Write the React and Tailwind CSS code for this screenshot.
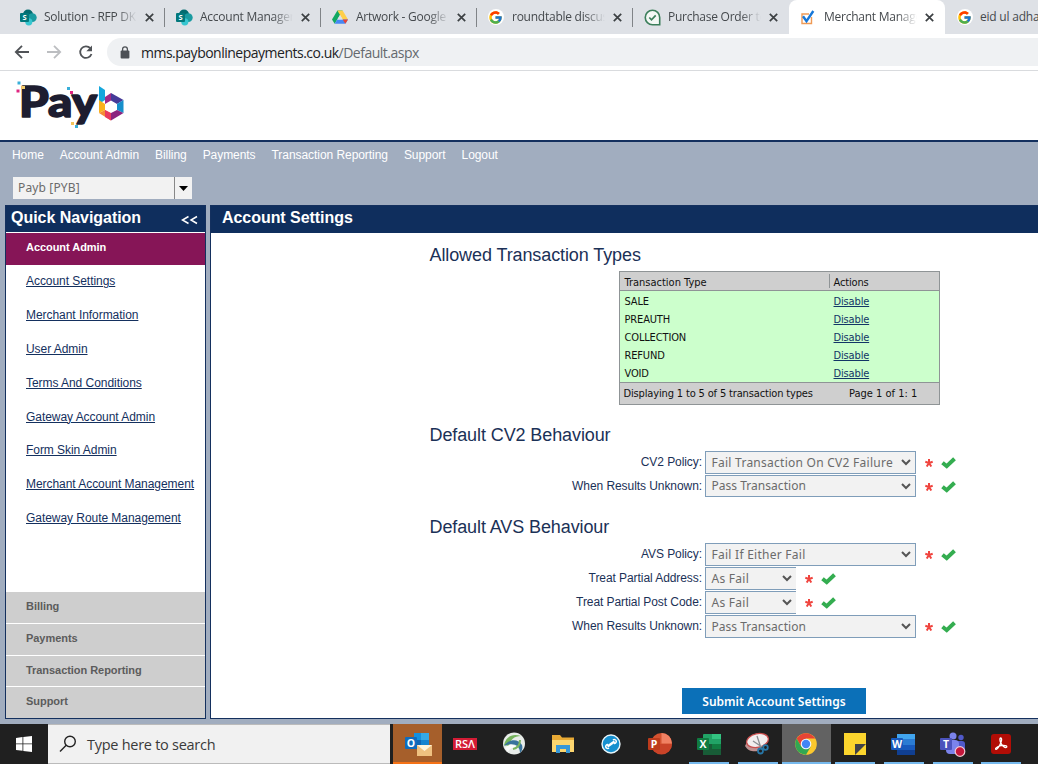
import React from "react";
import { FcGoogle } from "react-icons/fc";

const SharePoint = () => (
  <svg width="17" height="17" viewBox="0 0 17 17" className="shrink-0">
    <circle cx="8" cy="5.5" r="5" fill="#036c70" />
    <circle cx="12.3" cy="8.6" r="4.4" fill="#1a9ba1" />
    <circle cx="8.8" cy="12.8" r="3.6" fill="#37c6d0" />
    <rect x="0" y="4" width="9" height="9" rx="1" fill="#03787c" />
    <text x="4.5" y="11.2" textAnchor="middle" fontSize="7.5" fontWeight="700" fill="#fff" fontFamily="Open Sans, sans-serif">S</text>
  </svg>
);

const Drive = () => (
  <svg width="16" height="16" viewBox="0 0 16 16" className="shrink-0">
    <path d="M5.4 1.5h5.2L5.3 10.6 2.7 14.8 0 10.4z" fill="#11a861" />
    <path d="M5.4 1.5h5.2L16 10.4h-5.3z" fill="#ffcf48" />
    <path d="M5.3 10.4H16l-2.7 4.4H2.7z" fill="#4688f4" />
    <path d="M10.7 10.4H16l-2.7 4.4z" fill="#ea4335" />
    <path d="M8 6l2.7 4.4H5.3z" fill="#dee1e6" />
  </svg>
);

const Google = () => (
  <span className="flex size-4 shrink-0 items-center justify-center rounded-full bg-white">
    <FcGoogle size={15} />
  </span>
);

const Purchase = () => (
  <svg width="17" height="17" viewBox="0 0 17 17" fill="none" stroke="#3c7f5b" className="shrink-0">
    <path d="M8.5 1.2A7.2 7.2 0 1 0 8.5 15.7H15.7V8.5A7.2 7.2 0 0 0 8.5 1.2z" fill="#f4f8f5" strokeWidth="1.6" />
    <path d="M5.3 8.5l2.2 2.3 4.2-4.4" strokeWidth="1.7" />
  </svg>
);

const Checkbox = () => (
  <svg width="16" height="17" viewBox="0 0 16 17" fill="none" className="shrink-0">
    <path d="M9 5H2v9.5h9.5V8" stroke="#ef9a55" strokeWidth="1.4" />
    <path d="M3 7.2l3.5 5L13.3 2" stroke="#1677d8" strokeWidth="2.4" />
  </svg>
);

const CloseX = () => (
  <svg width="9" height="9" viewBox="0 0 9 9" stroke="#3c4043" strokeWidth="1.7" className="shrink-0">
    <path d="M.8.8l7.4 7.4M8.2.8L.8 8.2" />
  </svg>
);

const tabs = [
  { title: "Solution - RFP DK", icon: <SharePoint /> },
  { title: "Account Manager", icon: <SharePoint /> },
  { title: "Artwork - Google", icon: <Drive /> },
  { title: "roundtable discus", icon: <Google /> },
  { title: "Purchase Order to", icon: <Purchase /> },
  { title: "Merchant Manage", icon: <Checkbox />, active: true },
];

function Tab({ title, icon, active, divider }) {
  return (
    <div className={"relative flex h-[34px] w-[156px] shrink-0 items-center pl-[11px] " + (active ? "rounded-t-lg bg-white" : "")}>
      <span className="flex w-[24.5px] shrink-0">{icon}</span>
      <span className="w-[101px] shrink-0 whitespace-nowrap text-[12px] tracking-[-0.25px] text-[#45494d] [mask-image:linear-gradient(to_right,#000_72%,transparent_92%)]">{title}</span>
      <span className="flex"><CloseX /></span>
      {divider && <span className="absolute top-[8px] right-0 h-[19px] w-px bg-[#808387]" />}
    </div>
  );
}

function BrowserBar() {
  return (
    <header className="shrink-0 font-['Open_Sans',sans-serif]">
      <div className="flex h-[34px] overflow-hidden bg-[#dee1e6] pl-[8.5px]">
        {tabs.map((t, i) => (
          <Tab key={t.title} {...t} divider={i < 4} />
        ))}
        <div className="flex h-[34px] items-center pl-[12px]">
          <Google />
          <span className="ml-[7.5px] w-[57px] whitespace-nowrap text-[12px] tracking-[-0.22px] text-[#45494d]">eid ul adha</span>
        </div>
      </div>
      <div className="flex h-[37px] items-center border-b border-[#d9dbde] bg-white pl-[14px]">
        <svg width="84" height="20" viewBox="0 0 84 20" fill="none" strokeWidth="1.8" className="shrink-0">
          <path d="M15 10H2M8 3.8L1.8 10 8 16.2" stroke="#505357" />
          <path d="M33 10h13M40 3.8L46.2 10 40 16.2" stroke="#bcbec1" />
          <path d="M76.3 6.2A5.8 5.8 0 1 0 77.5 12" stroke="#505357" />
          <path d="M78 3.5v5.7h-5.7z" fill="#505357" />
        </svg>
        <div className="ml-[9px] flex h-[28px] flex-1 items-center rounded-l-full bg-[#eff1f3] pl-[13px]">
          <svg width="10" height="13" viewBox="0 0 10 13" className="shrink-0">
            <rect x="0.6" y="4.4" width="8.8" height="8" rx="1" fill="#4d5156" />
            <path d="M2.6 5V3.2a2.4 2.4 0 0 1 4.8 0V5" fill="none" stroke="#4d5156" strokeWidth="1.3" />
          </svg>
          <span className="ml-[11px] whitespace-nowrap text-[14px] tracking-[-0.5px] text-[#202124]">
            mms.paybonlinepayments.co.uk<span className="text-[#65696e]">/Default.aspx</span>
          </span>
        </div>
      </div>
    </header>
  );
}

function Logo() {
  return (
    <svg width="112" height="52" viewBox="0 0 112 52">
      <g fill="#1d1d30" stroke="#1d1d30" strokeLinejoin="round" strokeWidth="1.6" fontFamily="Lato, sans-serif" fontWeight="900" fontSize="42">
        <text x="4" y="37" textLength="78" lengthAdjust="spacingAndGlyphs">Pay</text>
      </g>
      <path d="M84 6l6 4v10l-6 4z" fill="#14a7dc" />
      <path d="M84 20l6 4v6l-6 3z" fill="#f9b21d" />
      <path d="M84 33l6-3 6 3.5v7z" fill="#f58a35" />
      <path d="M90 17l6-4v7.500l-6 3.500z" fill="#a02a86" />
      <path d="M96 13l12.500 7-6.500 4-6-3.500z" fill="#453a98" />
      <path d="M108.500 20v13l-6.500-3v-6z" fill="#168fcb" />
      <path d="M108.500 33L96 40.500v-7.500l6-3z" fill="#8b247f" />
      <path d="M96 40.500L90 37v-7l6 3z" fill="#e9385f" />
      <rect x="2.500" y="1.500" width="3" height="3" fill="#39afd9" />
      <rect x="7" y="6" width="3" height="3" fill="#f4cf6c" />
      <rect x="1.500" y="9.500" width="3" height="3" fill="#df2580" />
      <rect x="52" y="7" width="3" height="3" fill="#39afd9" />
      <rect x="55" y="11" width="3" height="3" fill="#df2580" />
      <rect x="56" y="42" width="3" height="3" fill="#f4c45a" />
      <rect x="60" y="45" width="3" height="3" fill="#39afd9" />
    </svg>
  );
}

const menu = ["Home", "Account Admin", "Billing", "Payments", "Transaction Reporting", "Support", "Logout"];
const links = [
  "Account Settings",
  "Merchant Information",
  "User Admin",
  "Terms And Conditions",
  "Gateway Account Admin",
  "Form Skin Admin",
  "Merchant Account Management",
  "Gateway Route Management",
];

function Sidebar() {
  return (
    <aside className="flex w-[201px] shrink-0 flex-col border border-[#14305e] bg-white">
      <div className="flex h-[26px] shrink-0 items-center justify-between bg-[#0f2e5d] pr-[7px] pb-[2px] pl-[5px] text-white">
        <h2 className="text-[16px] leading-none font-bold tracking-[-0.04px]">Quick Navigation</h2>
        <svg width="17" height="10" viewBox="0 0 17 10" fill="none" stroke="#fff" strokeWidth="1.5" className="mt-[3px]">
          <path d="M7.500 1.500L1.500 5l6 3.500M16 1.500L10 5l6 3.500" />
        </svg>
      </div>
      <div className="mt-px h-[32px] shrink-0 bg-[#861557] pl-[20px] text-[11px] leading-[29px] font-bold tracking-[-0.05px] text-white">Account Admin</div>
      <nav className="flex h-[327px] shrink-0 flex-col items-start pl-[20px]">
        {links.map((l) => (
          <a key={l} className="h-[33.8px] pt-[8.400px] text-[12px] leading-[17px] tracking-[-0.05px] whitespace-nowrap text-[#14305e] underline">{l}</a>
        ))}
      </nav>
      <div className="flex flex-1 flex-col gap-px">
        {["Billing", "Payments", "Transaction Reporting", "Support"].map((s) => (
          <div key={s} className="flex-1 bg-[#cecece] pl-[20px] text-[11px] leading-[29px] font-bold tracking-[-0.05px] text-[#5c5c5c]">{s}</div>
        ))}
      </div>
    </aside>
  );
}

function TransactionTable() {
  return (
    <div className="ml-[408px] flex h-[134px] w-[321px] flex-col border border-[#8f9496] bg-[#ccffcc] font-['DejaVu_Sans_Condensed','DejaVu_Sans',sans-serif] text-[11px] tracking-[-0.15px] text-[#111] [font-stretch:condensed]">
      <div className="flex h-[19px] border-b border-[#8f9496] bg-[#cfcfcf] leading-[21px]">
        <span className="w-[209px] pl-[4.500px] tracking-[0px]">Transaction Type</span>
        <span className="mt-[2px] h-[14px] border-l border-[#8f9496] pl-[3.500px] leading-[17px]">Actions</span>
      </div>
      <div className="flex h-[91px] flex-col pt-px">
        {["SALE", "PREAUTH", "COLLECTION", "REFUND", "VOID"].map((t) => (
          <div key={t} className="flex h-[18px] leading-[19px]">
            <span className="w-[213.500px] pl-[4.500px]">{t}</span>
            <a className="text-[#123566] underline">Disable</a>
          </div>
        ))}
      </div>
      <div className="flex flex-1 border-t border-[#8f9496] bg-[#cfcfcf] leading-[21px] whitespace-nowrap">
        <span className="w-[229px] pl-[3.500px]">Displaying 1 to 5 of 5 transaction types</span>
        <span className="tracking-[0px]">Page 1 of 1: 1</span>
      </div>
    </div>
  );
}

function Field({ label, value, small, short }) {
  return (
    <div className={"flex " + (short ? "mb-[2px] h-[22px]" : "mb-px h-[23px]")}>
      <label className="w-[492px] pr-[1px] text-right text-[12px] leading-[22px] tracking-[-0.07px] text-[#1b3157]">{label}</label>
      <div className={"ml-[2px] flex items-center justify-between border border-[#7f9db9] bg-[#f2f2f2] pl-[5.500px] font-['Noto_Sans',sans-serif] text-[12px] text-[#6b6b6b] " + (small ? "w-[91px] border-r-0 pr-[4px] tracking-[0.28px]" : "w-[211px] pr-[4px]")}>
        <span className={"whitespace-nowrap " + (value === "Pass Transaction" ? "tracking-[0.03px]" : "tracking-[0.26px]")}>{value}</span>
        <svg width="10" height="7" viewBox="0 0 10 7" fill="none" stroke="#555" strokeWidth="2"><path d="M1 1l4 4 4-4" /></svg>
      </div>
      <svg width="8" height="8" viewBox="0 0 8 8" stroke="#f0443e" strokeWidth="2" className="mt-[8px] ml-[9px]">
        <path d="M4 0v4M4 4L.3 2.800M4 4l3.700-1.200M4 4L1.700 7.500M4 4l2.300 3.500" />
      </svg>
      <svg width="15" height="12" viewBox="0 0 15 12" fill="none" stroke="#34ad50" strokeWidth="4" className="mt-[6px] ml-[7.500px]">
        <path d="M1.500 5.800l4.200 3.400L13.500 1.800" />
      </svg>
    </div>
  );
}

function Main() {
  const heading = "pl-[218.500px] text-[18px] leading-[22px] tracking-[-0.1px] text-[#1b3157]";
  return (
    <main className="ml-[4px] flex flex-1 flex-col border border-r-0 border-[#14305e] bg-white">
      <h1 className="h-[27px] shrink-0 bg-[#0f2e5d] pl-[11px] text-[16px] leading-[23px] font-bold tracking-[-0.05px] text-white">Account Settings</h1>
      <h2 className={heading + " mt-[11px] mb-[5px]"}>Allowed Transaction Types</h2>
      <TransactionTable />
      <h2 className={heading + " mt-[19px] mb-[5px]"}>Default CV2 Behaviour</h2>
      <Field label="CV2 Policy:" value="Fail Transaction On CV2 Failure" />
      <Field label="When Results Unknown:" value="Pass Transaction" short />
      <h2 className={heading + " mt-[17px] mb-[5px]"}>Default AVS Behaviour</h2>
      <Field label="AVS Policy:" value="Fail If Either Fail" />
      <Field label="Treat Partial Address:" value="As Fail" small />
      <Field label="Treat Partial Post Code:" value="As Fail" small />
      <Field label="When Results Unknown:" value="Pass Transaction" />
      <button className="mt-[49px] ml-[471px] h-[26px] w-[184px] bg-[#0b70b8] pt-px font-['Noto_Sans',sans-serif] text-[12px] font-semibold whitespace-nowrap text-white">Submit Account Settings</button>
    </main>
  );
}

const Letter = ({ x, y, children }) => (
  <text x={x} y={y} textAnchor="middle" fontSize="10.500" fontWeight="700" fill="#fff" fontFamily="Open Sans, sans-serif">{children}</text>
);

const icons = {
  outlook: (
    <>
      <rect x="9" y="2" width="15" height="16" rx="1" fill="#1066b5" />
      <path d="M9 2h7v7H9z" fill="#1490df" /><path d="M16 2h8v7h-8z" fill="#35a9e5" /><path d="M16 9h8v8h-8z" fill="#1683d0" />
      <rect x="0" y="6" width="12" height="12" rx="1" fill="#0f6cbd" />
      <Letter x={6} y={15.8}>O</Letter>
      <path d="M12 14h15v11H12z" fill="#efc180" /><path d="M12 14l7.500 6 7.500-6z" fill="#fff3dc" />
    </>
  ),
  rsa: (
    <>
      <rect x="0" y="7" width="24" height="12" fill="#d41c35" />
      <text x="12" y="16.800" textAnchor="middle" fontSize="10" fontWeight="600" fill="#fff" fontFamily="Open Sans, sans-serif" textLength="20" lengthAdjust="spacingAndGlyphs">RSΛ</text>
    </>
  ),
  cisco: (
    <>
      <circle cx="12" cy="12.500" r="11" fill="#e8ece9" />
      <path d="M2 14C4 5 11 2 19 5C12 5 8 9 7 15z" fill="#75b35c" />
      <path d="M2 15c5-7 14-8 18-1 1 3 0 6-2 8 0-8-7-11-16-7z" fill="#38739c" />
      <path d="M3 17c4-5 11-4 13 2-4-3-8-3-10 2z" fill="#fbfcfc" />
      <path d="M11 18c5-1 7-4 7-9" fill="none" stroke="#79b45f" strokeWidth="2" />
    </>
  ),
  folder: (
    <>
      <path d="M1 4h8l2 2.500h12V21H1z" fill="#e8aa35" /><path d="M1 9h22v12H1z" fill="#fcd66f" />
      <path d="M5 22v-8h14v8h-4v-4H9v4z" fill="#3798d8" />
    </>
  ),
  tool: (
    <>
      <circle cx="12" cy="13" r="9" fill="#1690cf" stroke="#e9f5fa" strokeWidth="1.400" />
      <path d="M8.500 15.500l7-5" stroke="#fff" strokeWidth="2.400" />
      <path d="M9 13.500A2 2 0 1 0 10 17M15 12.500A2 2 0 1 0 14 9" fill="none" stroke="#fff" strokeWidth="1.500" />
    </>
  ),
  ppt: (
    <>
      <circle cx="13.500" cy="12.500" r="10.500" fill="#d35230" /><path d="M13.500 2A10.500 10.500 0 0 1 24 12.500H13.500z" fill="#f08163" /><path d="M3 13h21A10.500 10.500 0 0 1 3 13z" fill="#c94328" />
      <rect x="0" y="7" width="12" height="12" rx="1" fill="#bd3b1c" /><Letter x={6} y={16.800}>P</Letter>
    </>
  ),
  excel: (
    <>
      <rect x="6" y="3" width="18" height="21" rx="1" fill="#21a366" /><path d="M15 3h9v5h-9z" fill="#33c481" /><path d="M6 13h18v11H6z" fill="#185c37" /><path d="M15 13h9v5h-9z" fill="#107c41" />
      <rect x="0" y="7" width="12" height="12" rx="1" fill="#107c41" /><Letter x={6} y={16.800}>X</Letter>
    </>
  ),
  snip: (
    <>
      <path d="M0 15c3 5 8 6 13 5l3-4C9 16 5 14 2 11z" fill="#bd9191" />
      <ellipse cx="12.500" cy="9.500" rx="11" ry="6.800" fill="#f2eeee" stroke="#c94d4c" strokeWidth="1.300" transform="rotate(-12 12.500 9.500)" />
      <path d="M12 5l4 12M8 10l9 6" stroke="#8a8d91" strokeWidth="1.300" />
      <circle cx="15.500" cy="20" r="2.500" fill="none" stroke="#2877a8" strokeWidth="1.800" /><circle cx="20.500" cy="16.500" r="2.300" fill="none" stroke="#2877a8" strokeWidth="1.800" />
    </>
  ),
  chrome: (
    <>
      <circle cx="12" cy="13" r="10.800" fill="#fbc82e" />
      <path d="M2.650 7.600A10.800 10.800 0 0 1 21.350 7.600H12L7.300 15.700z" fill="#e64435" />
      <path d="M2.650 7.600A10.800 10.800 0 0 0 12 23.800l4.700-8.100H7.300z" fill="#32a753" />
      <circle cx="12" cy="13" r="5.300" fill="#f4f7fd" /><circle cx="12" cy="13" r="4.200" fill="#4285f4" />
    </>
  ),
  note: (
    <>
      <path d="M1 2h22v22H1z" fill="#fbd52d" /><path d="M12 13h11L12 24z" fill="#404247" />
    </>
  ),
  word: (
    <>
      <rect x="6" y="3" width="18" height="21" rx="1" fill="#185abd" /><path d="M6 3h18v5H6z" fill="#41a5ee" /><path d="M6 8h18v6H6z" fill="#2b7cd3" /><path d="M6 19h18v5H6z" fill="#103f91" />
      <rect x="0" y="7" width="12" height="12" rx="1" fill="#185abd" /><Letter x={6} y={16.800}>W</Letter>
    </>
  ),
  teams: (
    <>
      <circle cx="13" cy="5" r="3.500" fill="#7b83eb" /><circle cx="21" cy="6.500" r="2.700" fill="#5059c9" /><rect x="15" y="10" width="10" height="11" rx="3" fill="#5059c9" /><rect x="6" y="9" width="13" height="14" rx="4" fill="#7b83eb" />
      <rect x="0" y="7" width="12" height="12" rx="1" fill="#4b53bc" /><Letter x={6} y={16.800}>T</Letter>
      <circle cx="20" cy="20.500" r="4.800" fill="#c4173b" stroke="#f0ccd3" strokeWidth="1.200" />
    </>
  ),
  acrobat: (
    <>
      <rect x="2" y="3" width="20" height="20" rx="3" fill="#b20d06" />
      <path d="M11.500 7c2 0 1 4-.8 7.200C9 17.500 7 19 6.500 18s3-3.200 7-3.600c3.500-.3 5 1 4 1.900-1.200 1-4.800-1.600-6-5-.7-2-.8-4.300 0-4.300z" fill="none" stroke="#fff" strokeWidth="1.300" />
    </>
  ),
};

function Taskbar() {
  return (
    <footer className="flex h-[40px] shrink-0 overflow-hidden bg-[#202020]">
      <div className="flex w-[48px] shrink-0 items-center justify-center">
        <svg width="16" height="16" viewBox="0 0 16 16" fill="#fff"><path d="M0 2l6.500-.9v6.400H0zM7.300 1L16 0v7.500H7.300zM0 8.300h6.500v6.500L0 14zM7.300 8.300H16V16l-8.700-1.100z" /></svg>
      </div>
      <div className="flex w-[342px] shrink-0 items-center border-y border-[#bbb] bg-[#f1f1f1] pl-[11px]">
        <svg width="18" height="18" viewBox="0 0 18 18" fill="none" stroke="#222" strokeWidth="1.400"><circle cx="11" cy="6.500" r="5.300" /><path d="M7.200 10.300L1 16.500" /></svg>
        <span className="ml-[10px] pt-px font-['Open_Sans',sans-serif] text-[14.500px] tracking-[-0.270px] text-[#3a3a3a]">Type here to search</span>
      </div>
      <div className="ml-[3px] flex">
        {Object.keys(icons).map((k, i) => (
          <div key={k} className={"flex w-[48.67px] shrink-0 flex-col items-center " + (k === "outlook" ? "bg-[#a65f2b]" : k === "chrome" ? "bg-[#626262]" : "")}>
            <svg width="24" height="25" viewBox="0 0 24 25" overflow="visible" className="mt-[7px] mr-[1px] mb-[6px] shrink-0">{icons[k]}</svg>
            {i === 0 && <span className="h-[2px] w-full bg-[#f57216]" />}
            {i >= 6 && <span className={"h-[2px] bg-[#76b9ed] " + (k === "chrome" ? "w-full" : "w-[40px]")} />}
          </div>
        ))}
      </div>
    </footer>
  );
}

export default function App() {
  return (
    <div className="flex h-[764px] w-[1038px] flex-col overflow-hidden bg-[#a1adbf] font-['Liberation_Sans',Arial,sans-serif]">
      <BrowserBar />
      <div className="h-[71px] shrink-0 border-b-2 border-[#14305e] bg-white pt-[9px] pl-[15px]">
        <Logo />
      </div>
      <nav className="flex h-[26px] shrink-0 items-center gap-[16px] pl-[12px] text-[12px] tracking-[-0.06px] text-white">
        {menu.map((m) => (
          <span key={m} className="whitespace-nowrap">{m}</span>
        ))}
      </nav>
      <div className="flex h-[37px] shrink-0 pt-[9px] pl-[13px]">
        <div className="flex h-[22px] w-[179px] bg-[#f2f2f2]">
          <span className="w-[161px] pl-[5px] font-['Noto_Sans',sans-serif] text-[12px] leading-[21px] tracking-[0.15px] text-[#6b6b6b]">Payb [PYB]</span>
          <span className="flex flex-1 items-center justify-center border-l border-[#888]">
            <svg width="9" height="5" viewBox="0 0 9 5"><path d="M0 0h9L4.500 5z" fill="#000" /></svg>
          </span>
        </div>
      </div>
      <div className="flex h-[514px] shrink-0 pl-[5px]">
        <Sidebar />
        <Main />
      </div>
      <div className="h-[5px] shrink-0" />
      <Taskbar />
    </div>
  );
}
